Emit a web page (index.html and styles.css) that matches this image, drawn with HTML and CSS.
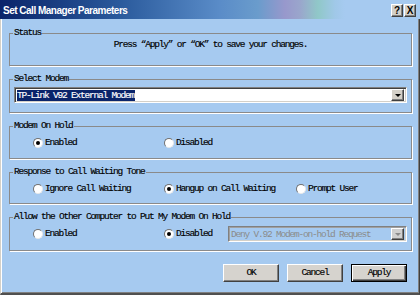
FILE: index.html
```html
<!DOCTYPE html>
<html>
<head>
<meta charset="utf-8">
<link rel="stylesheet" href="styles.css">
</head>
<body>
<div class="window">
  <div class="titlebar">
    <span class="title">Set Call Manager Parameters</span>
    <div class="tb-buttons">
      <span class="tb-btn">?</span>
      <span class="tb-btn close">X</span>
    </div>
  </div>
  <div class="content">
    <fieldset class="group">
      <legend>Status</legend>
      <div class="body body-status">
        <p class="status-text">Press “Apply” or “OK” to save your changes.</p>
      </div>
    </fieldset>
    <fieldset class="group">
      <legend>Select Modem</legend>
      <div class="body body-select">
        <div class="select">
          <span class="select-value"><span class="hl">TP-Link V92 External Modem</span></span>
          <span class="drop-btn"><span class="arrow"></span></span>
        </div>
      </div>
    </fieldset>
    <fieldset class="group">
      <legend>Modem On Hold</legend>
      <div class="body body-radios">
        <div class="radio-row">
          <label class="opt"><span class="radio checked"></span>Enabled</label>
          <label class="opt"><span class="radio"></span>Disabled</label>
        </div>
      </div>
    </fieldset>
    <fieldset class="group">
      <legend>Response to Call Waiting Tone</legend>
      <div class="body body-radios body-short">
        <div class="radio-row">
          <label class="opt"><span class="radio"></span>Ignore Call Waiting</label>
          <label class="opt"><span class="radio checked"></span>Hangup on Call Waiting</label>
          <label class="opt"><span class="radio"></span>Prompt User</label>
        </div>
      </div>
    </fieldset>
    <fieldset class="group">
      <legend>Allow the Other Computer to Put My Modem On Hold</legend>
      <div class="body body-allow">
        <div class="allow-row">
          <label class="opt opt-a"><span class="radio"></span>Enabled</label>
          <label class="opt opt-b"><span class="radio checked"></span>Disabled</label>
          <div class="select disabled">
            <span class="select-value">Deny V.92 Modem-on-hold Request</span>
            <span class="drop-btn"><span class="arrow"></span></span>
          </div>
        </div>
      </div>
    </fieldset>
    <div class="buttons">
      <span class="btn">OK</span>
      <span class="btn">Cancel</span>
      <span class="btn default">Apply</span>
    </div>
  </div>
</div>
</body>
</html>
```

FILE: styles.css
```css
html, body {
  margin: 0;
  padding: 0;
  background: #a6caf0;
}
.window {
  width: 420px;
  height: 295px;
  box-sizing: border-box;
  background: #a6caf0;
  border-left: 1px solid #d4d0c8;
  border-right: 1px solid #404040;
  border-bottom: 2px solid #505050;
  box-shadow: inset 1px 0 0 #ffffff, inset -1px -1px 0 #808080;
  display: flex;
  flex-direction: column;
  font-family: "Liberation Mono", "DejaVu Sans Mono", monospace;
  font-size: 9.5px;
  letter-spacing: -1.2px;
  -webkit-text-stroke: 0.15px #000;
  color: #000;
}
.titlebar {
  height: 19px;
  margin-left: -1px;
  margin-right: -1px;
  background: linear-gradient(to right, #0a246a 0px, #2a5a9c 120px, #5a8cc8 220px, #6a9ccc 258px, #9898cc 285px, #9aa6cc 300px, #90c8c8 318px, #a0c8e8 335px, #a6caf0 345px);
  display: flex;
  align-items: center;
  justify-content: space-between;
  -webkit-text-stroke: 0;
}
.title {
  font-family: "Liberation Sans", Arial, sans-serif;
  font-weight: bold;
  font-size: 10px;
  letter-spacing: -0.5px;
  color: #ffffff;
  padding-left: 3px;
  padding-top: 1px;
}
.tb-buttons {
  display: flex;
  gap: 1px;
  padding-right: 4px;
  padding-top: 2px;
}
.tb-btn {
  width: 12px;
  height: 13px;
  box-sizing: border-box;
  background: #d4d0c8;
  border-top: 1px solid #ffffff;
  border-left: 1px solid #ffffff;
  border-right: 1px solid #404040;
  border-bottom: 1px solid #404040;
  box-shadow: inset -1px -1px 0 #808080;
  font-family: "Liberation Sans", Arial, sans-serif;
  font-weight: bold;
  font-size: 10px;
  letter-spacing: 0;
  line-height: 11px;
  text-align: center;
  color: #000;
}
.content {
  flex: 1;
  display: flex;
  flex-direction: column;
  padding: 9px 7px 0 8px;
}
.group {
  margin: 0 0 8px 0;
  padding: 0;
  border: 1px solid #8a8a8a;
  box-shadow: 1px 1px 0 #ffffff;
  min-inline-size: 0;
}
.group legend {
  margin-left: 3px;
  padding: 0 1px;
  line-height: 10px;
  height: 10px;
}
.body {
  box-sizing: border-box;
}
.body-status {
  height: 27px;
  padding-top: 2px;
}
.status-text {
  margin: 0;
  line-height: 10px;
  text-align: center;
}
.body-select {
  height: 28px;
  padding: 3px 4px 0 4px;
}
.select {
  height: 16px;
  box-sizing: border-box;
  background: #ffffff;
  border-top: 1px solid #808080;
  border-left: 1px solid #808080;
  border-right: 1px solid #ffffff;
  border-bottom: 1px solid #ffffff;
  box-shadow: inset 1px 1px 0 #404040, inset -1px -1px 0 #d4d0c8;
  display: flex;
  align-items: center;
  justify-content: space-between;
  padding: 0 2px 0 2px;
}
.select-value {
  line-height: 11px;
}
.hl {
  background: #0a246a;
  color: #ffffff;
  -webkit-text-stroke: 0.15px #ffffff;
  display: inline-block;
  padding: 0 1px 0 0;
}
.drop-btn {
  width: 13px;
  height: 12px;
  box-sizing: border-box;
  background: #d4d0c8;
  border-top: 1px solid #ffffff;
  border-left: 1px solid #ffffff;
  border-right: 1px solid #404040;
  border-bottom: 1px solid #404040;
  box-shadow: inset -1px -1px 0 #808080;
  display: flex;
  align-items: center;
  justify-content: center;
}
.arrow {
  width: 0;
  height: 0;
  border-left: 3px solid transparent;
  border-right: 3px solid transparent;
  border-top: 3px solid #000;
}
.select.disabled {
  background: #a6caf0;
  width: 179px;
  border-top: 1px solid #808080;
  border-left: 1px solid #808080;
  box-shadow: inset 1px 1px 0 #a0a0a0, inset -1px -1px 0 #d4d0c8;
  color: #8a8a8a;
  -webkit-text-stroke: 0;
}
.select.disabled .drop-btn {
  background: #d0d0d0;
}
.select.disabled .arrow {
  border-top-color: #8a8a8a;
}
.body-radios {
  height: 27px;
  padding: 7px 0 0 23px;
}
.body-short {
  height: 26px;
}
.radio-row {
  display: grid;
  grid-template-columns: 131px 132px auto;
  line-height: 10px;
}
.opt {
  display: flex;
  align-items: center;
  gap: 2px;
  white-space: nowrap;
}
.radio {
  width: 10px;
  height: 10px;
  box-sizing: border-box;
  border-radius: 50%;
  background: #ffffff;
  border: 1px solid;
  border-color: #707070 #e8e8e8 #e8e8e8 #707070;
  display: flex;
  align-items: center;
  justify-content: center;
  flex: none;
}
.radio.checked::after {
  content: "";
  width: 4px;
  height: 4px;
  border-radius: 50%;
  background: #000;
}
.body-allow {
  height: 28px;
  padding: 4px 0 0 23px;
}
.allow-row {
  display: flex;
  align-items: center;
  height: 16px;
  line-height: 10px;
}
.opt-a {
  width: 131px;
}
.opt-b {
  width: 64px;
}
.buttons {
  display: flex;
  justify-content: flex-end;
  gap: 8px;
  margin-top: 5px;
  padding-right: 5px;
}
.btn {
  width: 56px;
  height: 18px;
  box-sizing: border-box;
  background: #d6d3ce;
  border-top: 1px solid #ffffff;
  border-left: 1px solid #ffffff;
  border-right: 1px solid #404040;
  border-bottom: 1px solid #404040;
  box-shadow: inset -1px -1px 0 #808080;
  display: flex;
  align-items: center;
  justify-content: center;
  line-height: 10px;
}
.btn.default {
  border: 1px solid #000;
  box-shadow: inset 1px 1px 0 #ffffff, inset -1px -1px 0 #404040, inset -2px -2px 0 #808080;
}
```
